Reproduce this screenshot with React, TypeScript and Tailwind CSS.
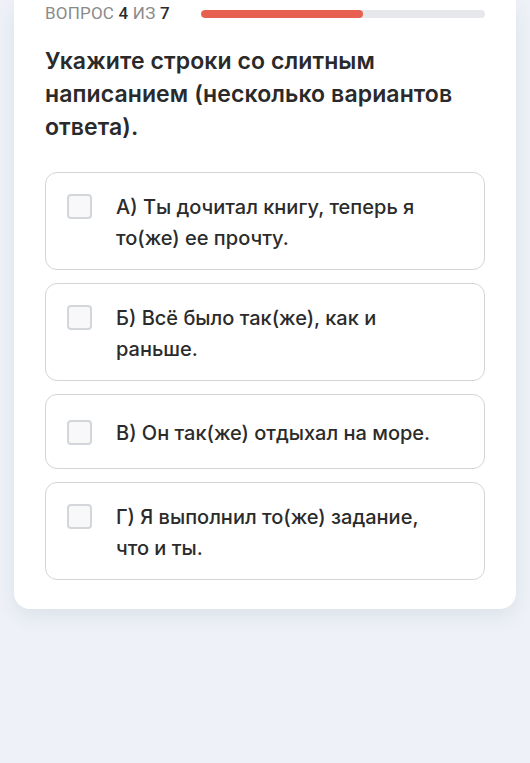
import { useState } from 'react';

const TOTAL = 7;
const CURRENT = 4;

const options = [
  { id: 'a', text: 'А) Ты дочитал книгу, теперь я то(же) ее прочту.' },
  { id: 'b', text: 'Б) Всё было так(же), как и раньше.' },
  { id: 'c', text: 'В) Он так(же) отдыхал на море.' },
  { id: 'd', text: 'Г) Я выполнил то(же) задание, что и ты.' },
];

export default function App() {
  const [selected, setSelected] = useState<string[]>([]);

  const toggle = (id: string) =>
    setSelected((s) => (s.includes(id) ? s.filter((x) => x !== id) : [...s, id]));

  const progress = (CURRENT / TOTAL) * 100;

  return (
    <div className="min-h-[763px] bg-[#eef2f8] px-[14px] font-['Inter',sans-serif]">
      {/* Question card */}
      <div className="bg-white rounded-b-[16px] px-[31px] pt-[4px] pb-[29px] shadow-[0_8px_20px_rgba(30,40,70,0.08)]">
        {/* Header */}
        <div className="flex items-center h-[20px]">
          <div className="w-[156px] font-['Roboto',sans-serif] text-[17px] tracking-[0.2px] text-[#8a8a8a]">
            ВОПРОС <span className="font-medium text-[#2b2b2b]">{CURRENT}</span> ИЗ{' '}
            <span className="font-medium text-[#2b2b2b]">{TOTAL}</span>
          </div>
          <div className="flex-1 h-[8px] rounded-full bg-[#e6e8ec] overflow-hidden">
            <div className="h-full rounded-full bg-[#e8604f]" style={{ width: `${progress}%` }} />
          </div>
        </div>

        {/* Question */}
        <h1 className="mt-[21px] text-[23px] leading-[33px] font-semibold tracking-[0.1px] text-[#2a2a2a]">
          Укажите строки со слитным написанием (несколько вариантов ответа).
        </h1>

        {/* Options */}
        <div className="mt-[28px] flex flex-col gap-[13px]">
          {options.map((o) => {
            const checked = selected.includes(o.id);
            return (
              <button
                key={o.id}
                onClick={() => toggle(o.id)}
                className="flex items-center min-h-[75px] w-full text-left rounded-[12px] border border-[#d5d5d5] bg-white pl-[21px] pr-[38px] pt-[19px] pb-[15px]"
              >
                <div className="flex items-start gap-[24px]">
                  <span
                    className={
                      checked
                        ? 'mt-[2px] shrink-0 w-[25px] h-[25px] rounded-[4px] border-2 border-[#e8604f] bg-[#e8604f]'
                        : 'mt-[2px] shrink-0 w-[25px] h-[25px] rounded-[4px] border-2 border-[#d3d6db] bg-[#f8f8f8]'
                    }
                  />
                  <span className="text-[20px] leading-[31px] font-medium text-[#2b2b2b]">{o.text}</span>
                </div>
              </button>
            );
          })}
        </div>
      </div>
    </div>
  );
}
